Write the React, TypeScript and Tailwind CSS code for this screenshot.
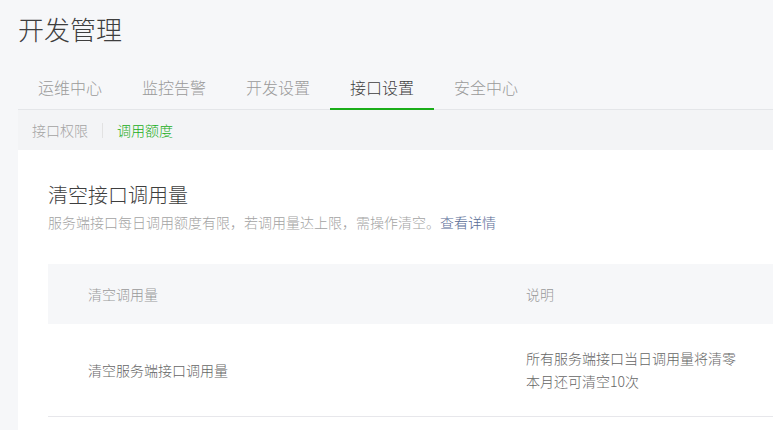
import React from 'react';

const tabs = ['运维中心', '监控告警', '开发设置', '接口设置', '安全中心'];

export default function App() {
  return (
    <div
      className="w-[773px] h-[430px] overflow-hidden bg-[#f6f7f9] pl-[18px] font-light"
      style={{ fontFamily: '"Noto Sans CJK SC", "Noto Sans", sans-serif' }}
    >
      {/* Page title */}
      <h1 className="pt-[12px] mb-[20px] text-[26px] leading-[34px] text-[#3e3e3e] font-light">开发管理</h1>

      {/* Main tabs */}
      <div className="flex border-b border-[#e4e6e9]">
        {tabs.map((t) => {
          const active = t === '接口设置';
          return (
            <div
              key={t}
              className={`relative h-[43px] px-5 text-[16px] leading-[43px] ${active ? 'text-[#3e3e3e]' : 'text-[#9a9a9a]'}`}
            >
              {t}
              {active && <div className="absolute left-0 right-0 bottom-[-1px] h-[2px] bg-[#1aad19]" />}
            </div>
          );
        })}
      </div>

      {/* Sub tabs */}
      <div className="flex items-center h-[40px] pl-[14px] text-[14px] bg-[#f3f4f6]">
        <span className="text-[#a3a3a3]">接口权限</span>
        <span className="mx-[14px] w-px h-[15px] bg-[#e2e2e2]" />
        <span className="text-[#1aad19]">调用额度</span>
      </div>

      {/* Card */}
      <div className="bg-white pl-[30px] pt-[31px] pb-10">
        <h2 className="text-[20px] leading-[28px] text-[#3e3e3e] font-light">清空接口调用量</h2>
        <p className="mt-[3px] text-[14px] leading-[20px] text-[#a3a3a3]">
          服务端接口每日调用额度有限，若调用量达上限，需操作清空。
          <a className="text-[#576b95]">查看详情</a>
        </p>

        <div className="mt-[32px] text-[14px]">
          <div className="grid grid-cols-[478px_1fr] h-[60px] items-center bg-[#f6f7f9] text-[#999]">
            <div className="pl-10">清空调用量</div>
            <div>说明</div>
          </div>
          <div className="grid grid-cols-[478px_1fr] items-center border-b border-[#e7e7eb] py-[23px] text-[#666]">
            <div className="pl-10">清空服务端接口调用量</div>
            <div className="leading-[23px]">
              <div>所有服务端接口当日调用量将清零</div>
              <div>本月还可清空10次</div>
            </div>
          </div>
        </div>
      </div>
    </div>
  );
}
